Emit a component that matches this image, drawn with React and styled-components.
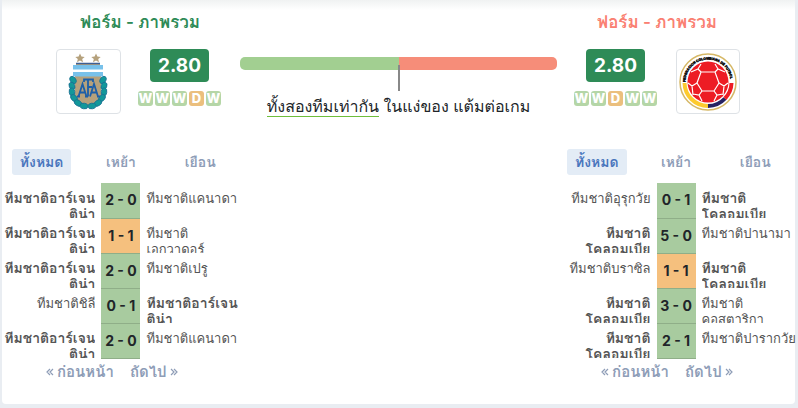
import { useState } from "react";
import styled, { createGlobalStyle } from "styled-components";

const GREEN = "#2e8b57";
const SALMON = "#fa8072";

const formColors = { W: "#b5d6a7", D: "#ebbf7e" };
const scoreColors = { W: "#a8cb9f", D: "#f5c07e" };

// zero width space marks where the long name may wrap
const ARGENTINA = "ทีมชาติอาร์เจน\u200bติน่า";
const COLOMBIA = "ทีมชาติโคลอมเบีย";

const argentina = {
  color: GREEN,
  rating: "2.80",
  form: ["W", "W", "W", "D", "W"],
  name: ARGENTINA,
  matches: [
    [ARGENTINA, "2 - 0", "ทีมชาติแคนาดา", "W"],
    [ARGENTINA, "1 - 1", "ทีมชาติเอกวาดอร์", "D"],
    [ARGENTINA, "2 - 0", "ทีมชาติเปรู", "W"],
    ["ทีมชาติชิลี", "0 - 1", ARGENTINA, "W"],
    [ARGENTINA, "2 - 0", "ทีมชาติแคนาดา", "W"],
  ],
};

const colombia = {
  color: SALMON,
  rating: "2.80",
  form: ["W", "W", "D", "W", "W"],
  name: COLOMBIA,
  matches: [
    ["ทีมชาติอุรุกวัย", "0 - 1", COLOMBIA, "W"],
    [COLOMBIA, "5 - 0", "ทีมชาติปานามา", "W"],
    ["ทีมชาติบราซิล", "1 - 1", COLOMBIA, "D"],
    [COLOMBIA, "3 - 0", "ทีมชาติคอสตาริกา", "W"],
    [COLOMBIA, "2 - 1", "ทีมชาติปารากวัย", "W"],
  ],
};

const tabs = ["ทั้งหมด", "เหย้า", "เยือน"];

// x, y and angle of the laurel leaves on the left half, mirrored for the right
const leaves = [
  [13, 27, 60],
  [12, 33, 70],
  [12, 39, 80],
  [14, 45, 50],
  [18, 50, 35],
  [24, 53, 10],
];

const ArgentinaCrest = () => (
  <svg width="58" height="58" viewBox="0 0 58 58" aria-label="AFA" role="img">
    <g fill="#b5a17c">
      <path d="M20 0.500l1.400 3.100 3.300.3-2.500 2.200.8 3.200-3-1.700-3 1.700.8-3.200-2.500-2.200 3.300-.3z" />
      <path d="M36 0.500l1.400 3.100 3.300.3-2.500 2.200.8 3.200-3-1.700-3 1.700.8-3.200-2.500-2.200 3.300-.3z" />
      <path d="M16 10h24v13h1v19q-1 8-13 11q-12-3-13-11V23h1z" />
    </g>
    <path d="M16 10.500h24" stroke="#3f5f93" strokeWidth="1.500" />
    {[1, -1].map((side) => (
      <g key={side} transform={`translate(28 0) scale(${side} 1) translate(-28 0)`}>
        {leaves.map(([x, y, angle]) => (
          <ellipse
            key={y} cx={x} cy={y} rx="4" ry="2.800"
            transform={`rotate(${angle} ${x} ${y})`}
            fill="#12989a" stroke="#1a6f93" strokeWidth="0.800"
          />
        ))}
      </g>
    ))}
    <path d="M13 12h30v11.500H13z" fill="#78c1ea" />
    <path d="M13 16.500h30v2.500H13z" fill="#fff" />
    <g fill="none" stroke="#1d5fa8" strokeWidth="1.800">
      <path d="M18.500 43.500L22.500 31l4 12.500M20 39.500h5M17 43.500h3M25 43.500h3" />
      <path d="M30 43.500L34 31l4 12.500M31.500 39.500h5M37 43.500h3" />
      <path d="M28 26v17.500M24 29v-2.500h9V29M28 34h4" />
    </g>
  </svg>
);

const ColombiaCrest = () => (
  <svg width="58" height="58" viewBox="0 0 58 58" aria-label="FCF" role="img">
    <circle cx="29" cy="29" r="28" fill="#fff" stroke="#d6b866" strokeWidth="1.500" />
    <path d="M5.500 30a23.500 23.500 0 0 0 23.500 23" fill="none" stroke="#fdca2e" strokeWidth="4" />
    <path d="M29 53a23.500 23.500 0 0 0 17-7.500" fill="none" stroke="#262262" strokeWidth="4" />
    <path d="M46 45.500a23.500 23.500 0 0 0 6.500-15.500" fill="none" stroke="#ed1c24" strokeWidth="4" />
    <path id="fcf-arc" d="M6.500 29a22.500 22.500 0 0 1 45 0" fill="none" />
    <text
      fontFamily="Liberation Sans, sans-serif" fontSize="3.400" fontWeight="700"
      fill="#111" stroke="#111" strokeWidth="0.500"
    >
      <textPath href="#fcf-arc">FEDERACION COLOMBIANA DE FUTBOL</textPath>
    </text>
    <circle cx="29" cy="29" r="20.500" fill="#ed1c24" />
    <g fill="none" stroke="#fff" strokeWidth="1.200">
      <path d="M22 19h14l4 11-5 8H23l-5-8z" />
      <path d="M22 19l-3-3-7 3M19 16l3-5M36 19l3-3 7 3M39 16l-3-5" />
      <path d="M18 30l-5 3-4-3M13 33l1 9M23 38l-3 4-6-1M20 42l3 6M40 30l5 3 4-3M45 33l-1 9M35 38l3 4 6-1M38 42l-3 6" />
    </g>
  </svg>
);

const TeamSummary = ({ team, children, reverse }) => (
  <div>
    <Title $color={team.color}>ฟอร์ม - ภาพรวม</Title>
    <TeamRow $reverse={reverse}>
      <LogoBox>{children}</LogoBox>
      <RatingBlock>
        <Rating>{team.rating}</Rating>
        <FormList>
          {team.form.map((result, i) => (
            <FormBadge key={i} $result={result}>{result}</FormBadge>
          ))}
        </FormList>
      </RatingBlock>
    </TeamRow>
  </div>
);

const TeamMatches = ({ team }) => {
  const [active, setActive] = useState(0);

  return (
    <Matches>
      <TabList>
        {tabs.map((tab, i) => (
          <Tab key={tab} $active={i === active} onClick={() => setActive(i)}>
            {tab}
          </Tab>
        ))}
      </TabList>
      <MatchTable>
        <tbody>
          {team.matches.map(([home, score, away, result], i) => (
            <tr key={i}>
              <TeamCell $align="right" $bold={home === team.name}>
                <TeamName>{home}</TeamName>
              </TeamCell>
              <ScoreCell $result={result}>{score}</ScoreCell>
              <TeamCell $align="left" $bold={away === team.name}>
                <TeamName>{away}</TeamName>
              </TeamCell>
            </tr>
          ))}
        </tbody>
      </MatchTable>
      <Pager>
        <PagerButton><Chevrons />ก่อนหน้า</PagerButton>
        <PagerButton>ถัดไป<Chevrons next /></PagerButton>
      </Pager>
    </Matches>
  );
};

const Chevrons = ({ next }) => (
  <svg width="8" height="8" viewBox="0 0 8 8" aria-hidden="true">
    <path
      d={next ? "M1 1l3 3-3 3M4 1l3 3-3 3" : "M4 1L1 4l3 3M7 1L4 4l3 3"}
      fill="none" stroke="currentColor" strokeWidth="1.200"
    />
  </svg>
);

const App = () => (
  <>
    <GlobalStyle />
    <Card>
      <Header>
        <TeamSummary team={argentina}><ArgentinaCrest /></TeamSummary>
        <Compare>
          <Bar>
            <BarPart $color="#a2cf91" />
            <BarPart $color="#f68d79" />
          </Bar>
          <Marker />
          <Verdict>
            <Underlined>ทั้งสองทีมเท่ากัน</Underlined> ในแง่ของ แต้มต่อเกม
          </Verdict>
        </Compare>
        <TeamSummary team={colombia} reverse><ColombiaCrest /></TeamSummary>
      </Header>
      <Body>
        <TeamMatches team={argentina} />
        <TeamMatches team={colombia} />
      </Body>
    </Card>
  </>
);

export default App;

const GlobalStyle = createGlobalStyle`
  * {
    box-sizing: border-box;
  }
  body {
    margin: 0;
    background: #e9edf2;
    font-family: Inter, Tahoma, Loma, Waree, "Noto Sans", sans-serif;
    color: #212529;
  }
  button {
    font-family: inherit;
    border: none;
    background: none;
    cursor: pointer;
  }
`;

const Card = styled.main`
  margin: 0 3px 4px 2px;
  padding: 12px 0 21px;
  border-radius: 0 0 4px 4px;
  background: linear-gradient(#f0f2f2, #fff 10px);
`;

const Header = styled.section`
  display: grid;
  grid-template-columns: 200px 1fr 200px;
  padding: 0 38px;
`;

const Title = styled.h2`
  margin: 0 0 17px;
  font-size: 17px;
  line-height: 20px;
  font-weight: 600;
  text-align: center;
  color: ${({ $color }) => $color};
`;

const TeamRow = styled.div`
  display: flex;
  flex-direction: ${({ $reverse }) => ($reverse ? "row-reverse" : "row")};
  justify-content: ${({ $reverse }) => ($reverse ? "flex-end" : "flex-start")};
  gap: ${({ $reverse }) => ($reverse ? "19px" : "17px")};
  padding: ${({ $reverse }) => ($reverse ? "0 17px" : "0 16px")};
`;

const LogoBox = styled.div`
  display: flex;
  align-items: center;
  justify-content: center;
  width: 65px;
  height: 65px;
  border: 1px solid #dee2e6;
  border-radius: 4px;
`;

const RatingBlock = styled.div`
  display: flex;
  flex-direction: column;
  align-items: center;
  gap: 9px;
`;

const Rating = styled.div`
  padding: 0 8px;
  border-radius: 4px;
  background: ${GREEN};
  color: #fff;
  font-size: 19px;
  line-height: 33px;
  font-weight: 700;
`;

const FormList = styled.div`
  display: flex;
  gap: 2px;
`;

const FormBadge = styled.span`
  display: flex;
  justify-content: center;
  width: 15px;
  border-radius: 3px;
  background: ${({ $result }) => formColors[$result]};
  color: #fff;
  font-size: 13px;
  line-height: 15px;
  font-weight: 800;
`;

const Compare = styled.div`
  display: flex;
  flex-direction: column;
  align-items: center;
  padding-top: 45px;
`;

const Bar = styled.div`
  display: flex;
  width: 100%;
  height: 13px;
  border-radius: 5px;
  overflow: hidden;
`;

const BarPart = styled.div`
  flex: 1;
  background: ${({ $color }) => $color};
`;

const Marker = styled.div`
  width: 2px;
  height: 26px;
  margin-top: -5px;
  background: #888;
`;

const Verdict = styled.p`
  margin: 3px 0 0;
  font-size: 16px;
  line-height: 24px;
  white-space: nowrap;
`;

const Underlined = styled.span`
  border-bottom: 1px solid #6ebe3b;
`;

const Body = styled.section`
  display: flex;
  justify-content: space-between;
  margin-top: 31px;
`;

const Matches = styled.div`
  width: 30%;
`;

const TabList = styled.div`
  display: grid;
  grid-template-columns: repeat(3, 1fr);
  justify-items: center;
  margin-bottom: 8px;
`;

const Tab = styled.button`
  padding: 0 8px;
  border-radius: 3px;
  background: ${({ $active }) => ($active ? "#e3ecf6" : "none")};
  color: ${({ $active }) => ($active ? "#4a76bd" : "#8e9db7")};
  font-size: 14px;
  line-height: 26px;
  font-weight: 600;
`;

const MatchTable = styled.table`
  width: 100%;
  table-layout: fixed;
  border-collapse: collapse;
`;

const TeamName = styled.div`
  height: 35px;
  padding-top: 7px;
  overflow: hidden;
`;

const TeamCell = styled.td`
  height: 35px;
  padding: ${({ $align }) => ($align === "right" ? "0 6px 0 0" : "0 0 0 6px")};
  vertical-align: top;
  text-align: ${({ $align }) => $align};
  font-size: ${({ $bold }) => ($bold ? "14px" : "13px")};
  line-height: 16px;
  font-weight: ${({ $bold }) => ($bold ? 600 : 400)};
  color: #555;

  /* away names may run up to the card edge */
  &:last-child ${TeamName} {
    margin-right: -3px;
  }
`;

const ScoreCell = styled.td`
  width: 39px;
  padding: 0;
  border-bottom: 1px solid #8fae88;
  background: ${({ $result }) => scoreColors[$result]};
  text-align: center;
  font-size: 14px;
  line-height: 34px;
  font-weight: 700;
  white-space: nowrap;
`;

const Pager = styled.div`
  display: flex;
  gap: 16px;
  padding: 2px 0 0 44px;
`;

const PagerButton = styled.button`
  display: flex;
  align-items: center;
  gap: 3px;
  padding: 0;
  color: #8e9db7;
  font-size: 15px;
  line-height: 22px;
  font-weight: 600;
`;
